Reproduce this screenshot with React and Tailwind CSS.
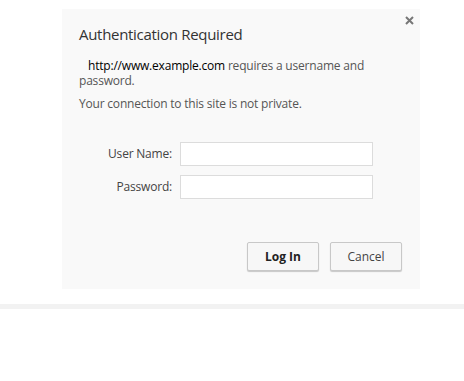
import React from "react";

export default function App() {
  return (
    <div className="w-[464px] h-[381px] bg-white font-['Open_Sans',sans-serif] overflow-hidden">
      <div className="pt-[9px] pl-[62px]">
        <div className="relative w-[358px] h-[280px] bg-[#f9f9f9] pl-[17px] pt-[14px]">
          <button className="absolute right-[6px] top-[7px] w-[9px] h-[9px]">
            <svg viewBox="0 0 9 9" className="w-[9px] h-[9px]">
              <path d="M1 1L8 8M8 1L1 8" stroke="#777" strokeWidth="2" />
            </svg>
          </button>
          <h1 className="text-[15px] leading-[22px] tracking-[-0.3px] text-[#333]">Authentication Required</h1>
          <p className="mt-[13px] text-[12px] leading-[15px] tracking-[-0.2px] text-[#555] w-[290px]">
            <span className="text-black pl-[9px]">http://www.example.com</span> requires a username and password.
          </p>
          <p className="mt-[8px] text-[12px] leading-[15px] tracking-[-0.2px] text-[#555]">
            Your connection to this site is not private.
          </p>
          <div className="mt-[31px] flex flex-col gap-[9px]">
            <div className="flex items-center gap-[8px]">
              <label className="w-[93px] text-right text-[12px] tracking-[-0.2px] text-[#444]">User Name:</label>
              <input className="w-[193px] h-[24px] bg-white border border-[#dcdcdc] outline-none" />
            </div>
            <div className="flex items-center gap-[8px]">
              <label className="w-[93px] text-right text-[12px] tracking-[-0.2px] text-[#444]">Password:</label>
              <input type="password" className="w-[193px] h-[24px] bg-white border border-[#dcdcdc] outline-none" />
            </div>
          </div>
          <div className="absolute right-[18px] top-[233px] flex gap-[11px]">
            <button className="w-[72px] h-[29px] bg-[#f7f7f7] border border-[#c8c8c8] rounded-[2px] shadow-[0_1px_1px_rgba(0,0,0,0.2)] text-[12px] font-bold text-[#222]">
              Log In
            </button>
            <button className="w-[72px] h-[29px] bg-[#f7f7f7] border border-[#c8c8c8] rounded-[2px] shadow-[0_1px_1px_rgba(0,0,0,0.2)] text-[12px] text-[#444]">
              Cancel
            </button>
          </div>
        </div>
      </div>
      <div className="mt-[15px] h-[5px] bg-[#f2f2f2]" />
    </div>
  );
}
